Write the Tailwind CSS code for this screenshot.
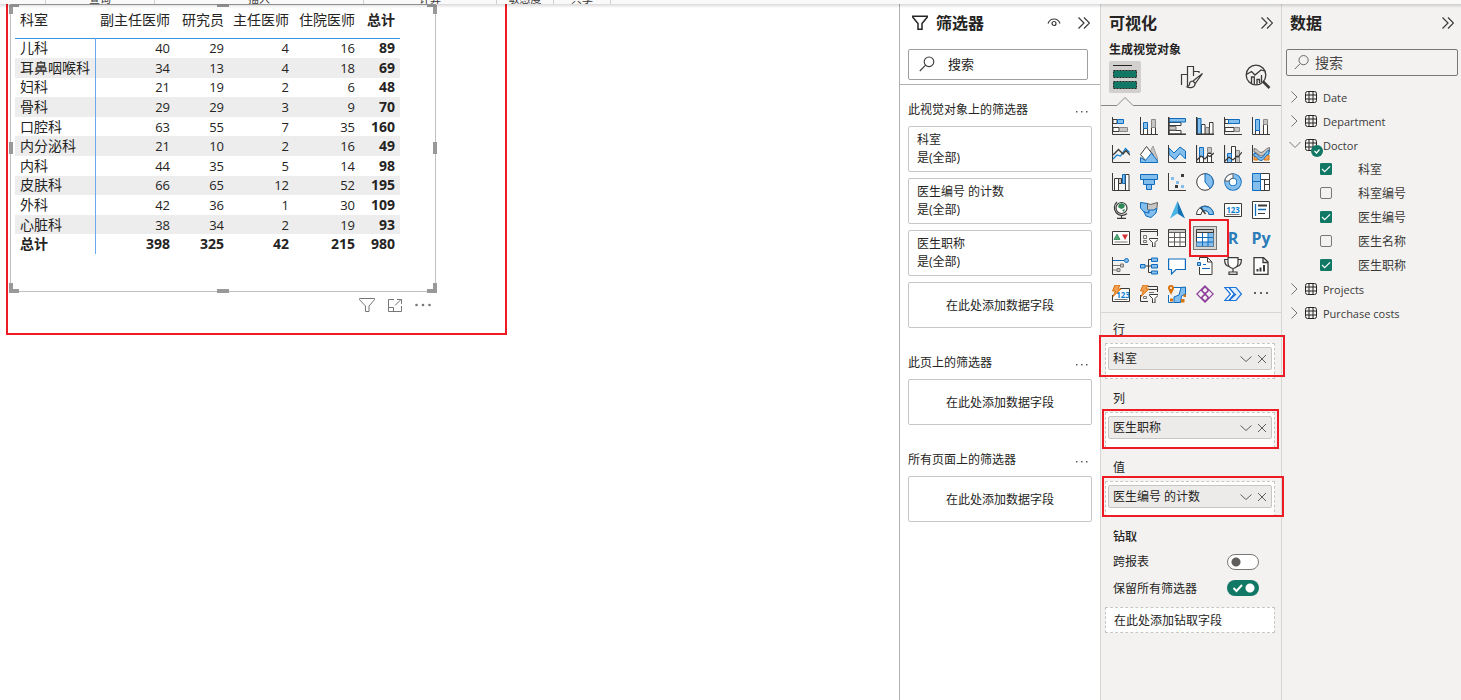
<!DOCTYPE html>
<html lang="zh-CN">
<head>
<meta charset="utf-8">
<meta name="viewport" content="width=device-width, initial-scale=1">
<title>报表</title>
<script src="https://cdn.jsdelivr.net/npm/@tailwindcss/browser@4"></script>
</head>
<body class="flex h-screen flex-col overflow-hidden bg-white font-['Open_Sans','Noto_Sans_CJK_SC',sans-serif] text-xs text-[#252423]">

<!-- Lower edge of the ribbon: group captions -->
<header class="relative z-10 flex h-1 shrink-0 items-end overflow-hidden bg-[#f9f9f9] text-[11px] leading-none text-[#3b3a39]">
  <div class="h-1 w-[46px] border-r border-[#d2d0ce]"></div>
  <div class="flex h-1 w-[109px] items-end justify-center border-r border-[#d2d0ce]"><span>查询</span></div>
  <div class="flex h-1 w-[209px] items-end justify-center border-r border-[#d2d0ce]"><span>插入</span></div>
  <div class="flex h-1 w-[133px] items-end justify-center border-r border-[#d2d0ce]"><span>计算</span></div>
  <div class="flex h-1 w-[57px] items-end justify-center border-r border-[#d2d0ce]"><span>敏感度</span></div>
  <div class="flex h-1 w-[57px] items-end justify-center border-r border-[#d2d0ce]"><span>共享</span></div>
</header>

<div class="relative flex min-h-0 flex-1">
  <div class="pointer-events-none absolute inset-x-0 top-0 z-10 h-1 bg-linear-to-b from-black/15 to-transparent"></div>

  <!-- Report canvas -->
  <main class="relative min-w-0 flex-1 overflow-hidden">
    <section class="relative ml-[10px] h-[288px] w-[426px] border border-[#c0c0c0] border-t-[#a6a6a6] pl-1" aria-label="矩阵">
      <table class="h-[249px] w-[385px] table-fixed border-collapse text-right text-[13px] leading-[18px] [&_td]:p-0 [&_td]:pr-[5px] [&_tbody_th]:border-r [&_tbody_th]:border-[#69a8ec] [&_tbody_th]:p-0 [&_tbody_th]:pl-[5px] [&_tbody_th]:text-left [&_tbody_th]:text-sm [&_tbody_th]:leading-[18px]">
        <colgroup><col class="w-[80px]"><col class="w-[80px]"><col class="w-[54px]"><col class="w-[65px]"><col class="w-[66px]"><col class="w-[40px]"></colgroup>
        <thead>
          <tr class="h-[33px] border-b border-[#3a96e0] text-sm leading-[18px] [&>th]:p-0 [&>th]:pt-[6px] [&>th]:pr-[5px] [&>th]:align-top [&>th]:whitespace-nowrap">
            <th scope="col" class="font-normal"><span class="block pl-[5px] text-left">科室</span></th><th scope="col" class="font-normal">副主任医师</th><th scope="col" class="font-normal">研究员</th><th scope="col" class="font-normal">主任医师</th><th scope="col" class="font-normal">住院医师</th><th scope="col" class="font-bold">总计</th>
          </tr>
        </thead>
        <tbody class="[&_td:last-child]:text-sm [&_td:last-child]:leading-[18px] [&_td:last-child]:font-bold">
          <tr><th scope="row" class="font-normal">儿科</th><td>40</td><td>29</td><td>4</td><td>16</td><td>89</td></tr>
          <tr class="bg-[#ededed]"><th scope="row" class="font-normal">耳鼻咽喉科</th><td>34</td><td>13</td><td>4</td><td>18</td><td>69</td></tr>
          <tr><th scope="row" class="font-normal">妇科</th><td>21</td><td>19</td><td>2</td><td>6</td><td>48</td></tr>
          <tr class="bg-[#ededed]"><th scope="row" class="font-normal">骨科</th><td>29</td><td>29</td><td>3</td><td>9</td><td>70</td></tr>
          <tr><th scope="row" class="font-normal">口腔科</th><td>63</td><td>55</td><td>7</td><td>35</td><td>160</td></tr>
          <tr class="bg-[#ededed]"><th scope="row" class="font-normal">内分泌科</th><td>21</td><td>10</td><td>2</td><td>16</td><td>49</td></tr>
          <tr><th scope="row" class="font-normal">内科</th><td>44</td><td>35</td><td>5</td><td>14</td><td>98</td></tr>
          <tr class="bg-[#ededed]"><th scope="row" class="font-normal">皮肤科</th><td>66</td><td>65</td><td>12</td><td>52</td><td>195</td></tr>
          <tr><th scope="row" class="font-normal">外科</th><td>42</td><td>36</td><td>1</td><td>30</td><td>109</td></tr>
          <tr class="bg-[#ededed]"><th scope="row" class="font-normal">心脏科</th><td>38</td><td>34</td><td>2</td><td>19</td><td>93</td></tr>
          <tr class="text-sm leading-[18px] font-bold"><th scope="row" class="font-bold">总计</th><td>398</td><td>325</td><td>42</td><td>215</td><td>980</td></tr>
        </tbody>
      </table>
      <!-- Resize handles -->
      <i class="absolute top-0 -left-[2px] h-[9px] w-[10px] border-t-2 border-l-4 border-[#999]"></i>
      <i class="absolute top-0 -right-[2px] h-[9px] w-[10px] border-t-2 border-r-4 border-[#999]"></i>
      <i class="absolute -bottom-[2px] -left-[2px] h-[10px] w-[10px] border-b-4 border-l-4 border-[#999]"></i>
      <i class="absolute -right-[2px] -bottom-[2px] h-[10px] w-[10px] border-r-4 border-b-4 border-[#999]"></i>
      <i class="absolute -top-px left-[206px] h-[3px] w-3 bg-[#999]"></i>
      <i class="absolute -bottom-[2px] left-[206px] h-1 w-3 bg-[#999]"></i>
      <i class="absolute top-[137px] -left-[2px] h-3 w-1 bg-[#999]"></i>
      <i class="absolute top-[137px] -right-[2px] h-3 w-1 bg-[#999]"></i>
    </section>
    <div class="flex w-[431px] items-center justify-end gap-3 pt-[5px]">
      <button aria-label="筛选" class="size-4"><svg viewBox="0 0 16 16" class="size-4" fill="none" stroke="#777"><path d="M.5 1.500h15v1.200L10 9v5.500H6.500V9L.5 2.700z"/></svg></button>
      <button aria-label="焦点模式" class="size-4"><svg viewBox="0 0 16 16" class="size-4" fill="none" stroke="#777"><path d="M7 2.500H1.500v12h13V9M1.500 10.500h5v4M8 8.500l6-6M10 2.500h4.500V7"/></svg></button>
      <button aria-label="更多选项" class="size-4"><svg viewBox="0 0 16 16" class="size-4" fill="#777"><circle cx="1.500" cy="8" r="1.300"/><circle cx="8" cy="8" r="1.300"/><circle cx="14.500" cy="8" r="1.300"/></svg></button>
    </div>
    <div class="pointer-events-none absolute -top-1 left-[6px] h-[335px] w-[501px] border-x-2 border-b-2 border-[#ed1c24]"></div>
  </main>

  <!-- Filter pane -->
  <aside class="flex w-[201px] shrink-0 flex-col border-l border-[#b3b0ad] bg-white">
    <div class="border-b border-[#b3b0ad] px-2 pb-1">
      <div class="flex h-[45px] items-center pb-[7px] pl-1">
        <svg viewBox="0 0 16 16" class="size-4" fill="none" stroke="#252423" stroke-width="1.500"><path d="M.8 1.200h14.400v1L10 8.500v5.700H6V8.500L.8 2.200z"/></svg>
        <h2 class="ml-2 flex-1 text-base leading-5 font-bold">筛选器</h2>
        <button aria-label="隐藏筛选器" class="mr-[17px]"><svg viewBox="0 0 14 12" class="h-3 w-[14px]" fill="none" stroke="#3b3a39" stroke-width="1.200"><path d="M1 6.500C2.200 3.500 4.500 2 7 2s4.800 1.500 6 4.500"/><circle cx="7" cy="6.500" r="2"/></svg></button>
        <button aria-label="折叠" class="mr-[2px]"><svg viewBox="0 0 12 14" class="h-[14px] w-3" fill="none" stroke="#3b3a39" stroke-width="1.200"><path d="M.5 1.500L6 7 .5 12.500M6 1.500L11.500 7 6 12.500"/></svg></button>
      </div>
      <label class="mr-1 flex h-[31px] items-center rounded-[2px] border border-[#a19f9d] pb-[2px] pl-[10px]">
        <svg viewBox="0 0 16 16" class="size-4 shrink-0" fill="none" stroke="#3b3a39" stroke-width="1.100"><circle cx="10" cy="5.800" r="4.800"/><path d="M6.600 9.200L.8 15"/></svg>
        <input type="text" aria-label="搜索筛选器" placeholder="搜索" class="ml-[13px] min-w-0 flex-1 text-[13px] leading-5 outline-none placeholder:text-[#252423]">
      </label>
    </div>
    <div class="flex flex-col gap-[26px] px-2 pt-4 leading-[18px]">
      <section>
        <div class="flex h-[18px] items-center justify-between pr-1"><h3>此视觉对象上的筛选器</h3><button aria-label="更多"><svg viewBox="0 0 12 4" class="mt-1 h-1 w-3" fill="#605e5c"><path d="M0 1h1.500v1.500H0zM5 1h1.500v1.500H5zM10 1h1.500v1.500H10z"/></svg></button></div>
        <div class="mt-[7px] flex flex-col gap-[6px]">
          <div class="flex h-[46px] flex-col justify-center rounded-[2px] border border-[#c8c6c4] px-2"><span>科室</span><span>是(全部)</span></div>
          <div class="flex h-[46px] flex-col justify-center rounded-[2px] border border-[#c8c6c4] px-2"><span>医生编号 的计数</span><span>是(全部)</span></div>
          <div class="flex h-[46px] flex-col justify-center rounded-[2px] border border-[#c8c6c4] px-2"><span>医生职称</span><span>是(全部)</span></div>
          <div class="flex h-[46px] items-center justify-center rounded-[2px] border border-[#c8c6c4] pt-[2px]">在此处添加数据字段</div>
        </div>
      </section>
      <section>
        <div class="flex h-[18px] items-center justify-between pr-1"><h3>此页上的筛选器</h3><button aria-label="更多"><svg viewBox="0 0 12 4" class="mt-1 h-1 w-3" fill="#605e5c"><path d="M0 1h1.500v1.500H0zM5 1h1.500v1.500H5zM10 1h1.500v1.500H10z"/></svg></button></div>
        <div class="mt-[7px] flex h-[46px] items-center justify-center rounded-[2px] border border-[#c8c6c4] pt-[2px]">在此处添加数据字段</div>
      </section>
      <section>
        <div class="flex h-[18px] items-center justify-between pr-1"><h3>所有页面上的筛选器</h3><button aria-label="更多"><svg viewBox="0 0 12 4" class="mt-1 h-1 w-3" fill="#605e5c"><path d="M0 1h1.500v1.500H0zM5 1h1.500v1.500H5zM10 1h1.500v1.500H10z"/></svg></button></div>
        <div class="mt-[7px] flex h-[46px] items-center justify-center rounded-[2px] border border-[#c8c6c4] pt-[2px]">在此处添加数据字段</div>
      </section>
    </div>
  </aside>

  <!-- Visualizations pane -->
  <aside class="relative w-[182px] shrink-0 border-x border-[#d8d6d4] bg-[#f3f2f1]">
    <div class="flex h-[38px] items-center justify-between pr-2 pl-2">
      <h2 class="text-base leading-5 font-bold">可视化</h2>
      <button aria-label="折叠"><svg viewBox="0 0 12 14" class="h-[14px] w-3" fill="none" stroke="#3b3a39" stroke-width="1.200"><path d="M.5 1.500L6 7 .5 12.500M6 1.500L11.500 7 6 12.500"/></svg></button>
    </div>
    <h3 class="h-[19px] pl-2 text-xs leading-4 font-bold">生成视觉对象</h3>
    <div class="flex h-8 justify-between pr-[7px] pl-2">
      <button aria-label="生成视觉对象" class="grid size-8 place-items-center rounded-[2px] bg-[#d2d0ce]"><svg viewBox="0 0 24 24" class="size-6" fill="#117865"><path d="M0 .5h19" stroke="#252423"/><path d="M.5 5.500h23v7H.5zM.5 16.500h23v7H.5z" stroke="#252423" stroke-dasharray="2 1"/></svg></button>
      <button aria-label="设置视觉对象格式" class="grid size-8 place-items-center"><svg viewBox="0 0 24 24" class="size-6" fill="none" stroke="#3b3a39" stroke-width="1.200"><path d="M1.500 20V9.500h6V21M7.500 12V1.500h6V11M13.500 6.500H19V8"/><path d="M22.500 8.500L13 16l2.200 2.500zM13 16c-2.500 0-3.500 1.500-3.500 3.500-.5 1.500-1.500 2.200-2.500 2.500 3 1.500 8 .5 8.200-3.500z"/></svg></button>
      <button aria-label="分析" class="grid size-8 place-items-center"><svg viewBox="0 0 26 26" class="size-[26px]" fill="none" stroke="#3b3a39" stroke-width="1.300"><circle cx="11" cy="11" r="9.800"/><path d="M1.500 10.500l5-3 3.500 3.500 6-5 3.500 1M6.500 19v-6h2.800v7.500M12 20.500v-5h2.500V19M16.500 18v-7"/><path d="M18 17.500l6.500 6.500" stroke-width="2.500"/></svg></button>
    </div>
    <svg viewBox="0 0 180 12" preserveAspectRatio="none" class="mt-1 block h-3 w-full" fill="none" stroke="#8a8886"><path d="M0 8.500h16l8-8 8 8h148"/></svg>

    <div class="mx-[6px] mt-[3px] grid grid-cols-6 text-[#2b7cb8] [&_svg]:size-[18px] [&>button]:grid [&>button]:h-7 [&>button]:place-items-center">
      <!-- row 1 -->
      <button aria-label="堆积条形图"><svg viewBox="0 0 18 18" fill="#fff" stroke="#3b3a39"><path d="M1 2.500h4v4H1zM1 10.500h6v4H1z"/><path d="M5.500 2.500h6v4h-6z" fill="#83beec" stroke="#0f6cbd"/><path d="M7.500 10.500h8v4h-8z" fill="#c8c6c4" stroke="#8a8886"/><path d="M.5 0v17.500H18" fill="none"/></svg></button>
      <button aria-label="堆积柱形图"><svg viewBox="0 0 18 18" fill="#fff" stroke="#3b3a39"><path d="M3.500 11.500h4v6h-4zM11.500 10.500h4v7h-4z"/><path d="M3.500 5.500h4v6h-4z" fill="#83beec" stroke="#0f6cbd"/><path d="M11.500 2.500h4v8h-4z" fill="#c8c6c4" stroke="#8a8886"/><path d="M.5 0v17.500H18" fill="none"/></svg></button>
      <button aria-label="簇状条形图"><svg viewBox="0 0 18 18" fill="#fff" stroke="#797775"><path d="M1 5.500h12v3H1zM1 13.500h12v3.500H1z" stroke="#3b3a39"/><path d="M1 1.500h16.500v3.500H1z" fill="#83beec" stroke="#0f6cbd"/><path d="M1 9.500h7v3.500H1z" fill="#c8c6c4"/><path d="M.7 0v17.300H18" fill="none" stroke="#3b3a39" stroke-width="1.500"/></svg></button>
      <button aria-label="簇状柱形图"><svg viewBox="0 0 18 18" fill="#fff" stroke="#797775"><path d="M5.500 7.500h3.500v10H5.500zM13.500 5.500h3.500v12h-3.500z" stroke="#3b3a39"/><path d="M1.500 1.500h3.500v16H1.500z" fill="#83beec" stroke="#0f6cbd"/><path d="M9.500 10.500h3.500v7H9.500z" fill="#c8c6c4"/><path d="M.7 0v17.300H18" fill="none" stroke="#3b3a39" stroke-width="1.500"/></svg></button>
      <button aria-label="百分比堆积条形图"><svg viewBox="0 0 18 18" fill="#fff" stroke="#3b3a39"><path d="M1 2.500h4v4H1zM1 10.500h9v4H1z"/><path d="M4.500 2.500h11v4h-11z" fill="#83beec" stroke="#0f6cbd"/><path d="M10.500 10.500h5v4h-5z" fill="#c8c6c4" stroke="#8a8886"/><path d="M.5 0v17.500H18" fill="none"/></svg></button>
      <button aria-label="百分比堆积柱形图"><svg viewBox="0 0 18 18" fill="#fff" stroke="#3b3a39"><path d="M3.500 12.500h4v5h-4zM11.500 7.500h4v10h-4z"/><path d="M3.500 2.500h4v11h-4z" fill="#83beec" stroke="#0f6cbd"/><path d="M11.500 2.500h4v5h-4z" fill="#c8c6c4" stroke="#8a8886"/><path d="M.5 0v17.500H18" fill="none"/></svg></button>
      <!-- row 2 -->
      <button aria-label="折线图"><svg viewBox="0 0 18 18" fill="none" stroke="#3b3a39"><path d="M1 14l4-4 3.500 1 5-7.500 4 4" stroke="#0f7fd0" stroke-width="1.200"/><path d="M1 10l5.500-5.500L11 9l3-3.500L18 10" stroke-width="1.400"/><path d="M.5 0v17.500H18"/></svg></button>
      <button aria-label="分区图"><svg viewBox="0 0 18 18" fill="#fff" stroke="#3b3a39"><path d="M9 9l4-8 4.500 12v4z" fill="#c8c6c4" stroke="#a19f9d"/><path d="M.5 9.500l6-8 7 9-7 6z"/><path d="M.5 17.500v-5l5 3L11.500 8l6 8v1.500z" fill="#83beec" stroke="#0f6cbd"/></svg></button>
      <button aria-label="堆积面积图"><svg viewBox="0 0 18 18" fill="none" stroke="#3b3a39"><path d="M1 3l5 5 6-6 5.500 4v8L12 8.500l-5 6-6-5z" fill="#83beec" stroke="#0f6cbd"/><path d="M.5 0v17.500H18"/></svg></button>
      <button aria-label="折线和堆积柱形图"><svg viewBox="0 0 18 18" fill="#fff" stroke="#3b3a39"><path d="M3.500 10.500h4v7h-4zM11.500 8.500h4v9h-4z"/><path d="M3.500 2.500h4v9h-4z" fill="#83beec" stroke="#0f6cbd"/><path d="M11.500 2.500h4v5h-4z" fill="#c8c6c4" stroke="#8a8886"/><path d="M.5 0v17.500H18M1 15l4-4 4 3 3-3.500 2 1L18 8" fill="none" stroke-width="1.200"/></svg></button>
      <button aria-label="折线和簇状柱形图"><svg viewBox="0 0 18 18" fill="#fff" stroke="#3b3a39"><path d="M11.500 5.500h4v12h-4z" fill="#c8c6c4" stroke="#8a8886"/><path d="M7.500 1.500h4v16h-4z"/><path d="M3.500 8.500h4v9h-4z" fill="#83beec" stroke="#0f6cbd"/><path d="M.5 0v17.500H18M1 16l4-4 4 3 4-4 1 1 4-5" fill="none" stroke-width="1.200"/></svg></button>
      <button aria-label="功能区图表"><svg viewBox="0 0 18 18" fill="none"><path d="M2 9h4v6H2zM12 10h5v5h-5z" fill="#f2a154" stroke="#d9730d"/><path d="M2 3.500c4 0 4 4 7 4s4-4 8.500-5v4C13 8 12 11 9 11S6 7 2 7z" fill="#c8c6c4" stroke="#797775"/><path d="M2 8c4 0 4 4.500 7 4.500S12 8 17 5v4c-4 1-5 6.500-8 6.500S6 12 2 11z" fill="#83beec" stroke="#0f6cbd"/><path d="M.5 0v17.500H18" stroke="#3b3a39"/></svg></button>
      <!-- row 3 -->
      <button aria-label="瀑布图"><svg viewBox="0 0 18 18" fill="#fff" stroke="#3b3a39"><path d="M2.500 5.500h4v12h-4zM13.500 1.500h3.500v16h-3.500z"/><path d="M6.500 5.500h3v5h-3z" fill="#c8c6c4"/><path d="M10.500 1.500h2.500v9h-2.500z" fill="#83beec" stroke="#0f6cbd"/><path d="M.5 0v17.500H18" fill="none"/></svg></button>
      <button aria-label="漏斗图"><svg viewBox="0 0 18 18" fill="#83beec" stroke="#0f6cbd"><path d="M.5 1.500h17v5H.5zM3.500 6.500h11v5h-11zM6.500 11.500h5v5h-5z"/></svg></button>
      <button aria-label="散点图"><svg viewBox="0 0 18 18"><path d="M3 4h3v3H3zM8 8h3v3H8zM13 12h3v3h-3z" fill="#83beec"/><path d="M13 1h3v3h-3zM7 12h3v3H7z" fill="#3b3a39"/><path d="M.5 0v17.500H18" fill="none" stroke="#3b3a39"/></svg></button>
      <button aria-label="饼图"><svg viewBox="0 0 18 18"><circle cx="9" cy="9" r="8.300" fill="#fff" stroke="#3b3a39"/><path d="M9 9V.7a8.300 8.300 0 0 1 5.300 14.600z" fill="#83beec" stroke="#0f6cbd"/></svg></button>
      <button aria-label="圆环图"><svg viewBox="0 0 18 18"><circle cx="9" cy="9" r="6" fill="#fff" stroke="#0f6cbd" stroke-width="5.500"/><circle cx="9" cy="9" r="6" fill="none" stroke="#83beec" stroke-width="3.800"/><path d="M9 .7A8.300 8.300 0 0 0 .8 8h4.500A3.800 3.800 0 0 1 9 5.200z" fill="#fff" stroke="#605e5c"/></svg></button>
      <button aria-label="树状图"><svg viewBox="0 0 18 18" fill="#fff" stroke="#3b3a39"><path d="M8.500.5h9v17h-9zM8.500 6.500h9M12.500 6.500v11M12.500 11.500h5" /><path d="M.5.5h8v17h-8zM.5 8.500h8" fill="#83beec" stroke="#0f6cbd"/></svg></button>
      <!-- row 4 -->
      <button aria-label="地图"><svg viewBox="0 0 18 18" fill="none" stroke="#3b3a39" stroke-width="1.200"><circle cx="9.500" cy="7" r="5.500" fill="#fff"/><path d="M7 3l3-1 3 2-1 3-3 1-3-2zM10 9l3-1-1 3z" fill="#2e8b57" stroke="none"/><path d="M5 1A7.500 7.500 0 1 0 15 12.500M9.500 14.500v2.500M5 17.300h9"/></svg></button>
      <button aria-label="着色地图"><svg viewBox="0 0 18 18" stroke="#0f6cbd"><path d="M.5 1.500l7 1V8L9 9v4l-5-2-3.500-4z" fill="#83beec"/><path d="M7.500 2.500l3 1 7-2-.5 5-3 3H9L7.500 8z" fill="#c8c6c4" stroke="#605e5c"/><path d="M9 9h5l3-2-1 5-5 4.500L6 15l-2-4 5 1z" fill="#83beec"/></svg></button>
      <button aria-label="Azure 地图"><svg viewBox="0 0 18 18"><path d="M9.500 0L2 17.500l7.500-5z" fill="#47b5e6"/><path d="M9.500 0L17 17.500l-7.500-5z" fill="#1272b6"/></svg></button>
      <button aria-label="仪表"><svg viewBox="0 0 18 18"><path d="M.5 13.500a8.500 8.500 0 0 1 17 0H13a4 4 0 0 0-8 0z" fill="#fff" stroke="#3b3a39"/><path d="M4 7a8.500 8.500 0 0 1 13.500 6.500H13a4 4 0 0 0-5-3.800z" fill="#83beec" stroke="#0f6cbd"/><path d="M9.500 13L5 7" stroke="#3b3a39" stroke-width="1.400"/></svg></button>
      <button aria-label="卡片"><svg viewBox="0 0 18 18"><path d="M.5 2.500h17v13H.5z" fill="#fff" stroke="#3b3a39"/><path d="M2.500 13.500h13" stroke="#797775"/><text x="9" y="11.500" text-anchor="middle" font-size="8" font-weight="700" fill="#0f7fd0">123</text></svg></button>
      <button aria-label="多行卡"><svg viewBox="0 0 18 18"><path d="M.5.500h17v17H.5z" fill="#fff" stroke="#3b3a39"/><path d="M3.500 3v12" stroke="#0f6cbd" stroke-width="1.300"/><path d="M6 12.500h7" stroke="#3b3a39"/><path d="M6 4.500h9" stroke="#3b3a39" stroke-width="2"/><path d="M6 8.500h8" stroke="#0f6cbd" stroke-width="1.500"/></svg></button>
      <!-- row 5 -->
      <button aria-label="KPI"><svg viewBox="0 0 18 18"><path d="M.5 2.500h17v13H.5z" fill="#fff" stroke="#3b3a39"/><path d="M2 10.500L5 5l3 5.500z" fill="#4ea872" stroke="#237b4b" stroke-width=".7"/><path d="M10 5.500h6L13 11z" fill="#d13438"/><path d="M2.500 13h13" stroke="#797775"/></svg></button>
      <button aria-label="切片器"><svg viewBox="0 0 18 18" fill="none" stroke="#3b3a39"><path d="M8 15.500H.5V.5h17V7M.5 2.500h17"/><path d="M3.500 6.500h3v3h-3zM3.500 11.500h3v2h-3z" stroke="#797775"/><path d="M9.500 9.500h8.500v1L15 13.500V18h-2.500v-4.500l-3-3z" fill="#fff"/></svg></button>
      <button aria-label="表"><svg viewBox="0 0 18 18" fill="#fff" stroke="#3b3a39"><path d="M.5.500h17v17H.5z"/><path d="M1 1h16v2.500H1z" fill="#c8c6c4" stroke="none"/><path d="M.5 3.500h17M.5 8.500h17M.5 13h17M6.500 4v13.500M12 4v13.500" stroke="#605e5c"/></svg></button>
      <button aria-label="矩阵" aria-pressed="true"><span class="grid size-6 place-items-center border border-[#797775] bg-[#d9d7d5]"><svg viewBox="0 0 18 18" fill="#fff" stroke="#3b3a39"><path d="M.5.500h17v17H.5z"/><path d="M1 1h16v2.500H1z" fill="#c8c6c4" stroke="none"/><path d="M12 3.500h5.500v14H.5V13H12z" fill="#83beec" stroke="none"/><path d="M.5 3.500h17"/><path d="M1 8.500h16M1 13h16M6.500 4v13M12 4v13" stroke="#0f6cbd"/></svg></span></button>
      <button aria-label="R 脚本视觉对象" class="text-base leading-5 font-bold">R</button>
      <button aria-label="Python 视觉对象" class="text-base leading-5 font-bold">Py</button>
      <!-- row 6 -->
      <button aria-label="关键影响者"><svg viewBox="0 0 18 18" fill="none" stroke="#3b3a39"><path d="M.5 0v17.500H18"/><path d="M1 3.500h11" stroke="#0f6cbd"/><circle cx="14.500" cy="3.500" r="2" fill="#83beec" stroke="#0f6cbd"/><path d="M1 8.500h7M1 13h4" stroke="#797775"/><path d="M8.500 7h3v3h-3zM5 11.500h3v3H5z" fill="#c8c6c4" stroke="#797775"/></svg></button>
      <button aria-label="分解树"><svg viewBox="0 0 18 18" fill="#83beec" stroke="#0f6cbd"><path d="M5 9h3M12 2.500H8.500v13H12M8.500 9H12" fill="none" stroke="#3b3a39"/><path d="M.5 7.500H5V11H.5zM11.500 1h6v3.500h-6zM11.500 7.500h6V11h-6zM11.500 14h6v3h-6z"/></svg></button>
      <button aria-label="问答"><svg viewBox="0 0 18 18" fill="#fff" stroke="#0f6cbd" stroke-width="1.200"><path d="M.6 2h16.800v10.500H8L3.500 17v-4.500H.6z"/></svg></button>
      <button aria-label="智能叙述"><svg viewBox="0 0 18 18" fill="#fff" stroke="#3b3a39"><path d="M3.500 3V.5h8L16 5v12.500H3.500V10"/><path d="M11.500.5V5h4.500" fill="none"/><path d="M1.500 5.500h3v3h-3z" fill="#83beec" stroke="#0f6cbd"/><path d="M7 7.500h3M6 11.500h8" stroke="#0f6cbd"/></svg></button>
      <button aria-label="指标"><svg viewBox="0 0 18 18" fill="#fff" stroke="#3b3a39" stroke-width="1.200"><path d="M4 2.500H.6C.6 7 2 9 5 9.500M14 2.500h3.400C17.400 7 16 9 13 9.500" fill="none"/><path d="M4 .6h10V6c0 3-2 5-5 5.500C6 11 4 9 4 6zM9 11.500V15M5 17.400h8V15H5z"/></svg></button>
      <button aria-label="分页报表"><svg viewBox="0 0 18 18" fill="#fff" stroke="#3b3a39" stroke-width="1.300"><path d="M2 .700h9.500L16 5v12.300H2z"/><path d="M11 .700V5.500h5" fill="none"/><path d="M5.500 14.500V12M8.500 14.500V10.500M12 14.500V8" stroke-width="2"/></svg></button>
      <!-- row 7 -->
      <button aria-label="卡片（新）"><svg viewBox="0 0 18 18"><path d="M8 3.500h9.500v13H.5V10" fill="#fff" stroke="#3b3a39"/><path d="M2.500 14.500h13" stroke="#797775"/><text x="11" y="12.500" text-anchor="middle" font-size="8" font-weight="700" fill="#0f7fd0">123</text><path d="M3 0h5L6 4h3L1 11.500 3.500 6H.5z" fill="#f2a154" stroke="#d9730d"/></svg></button>
      <button aria-label="切片器（新）"><svg viewBox="0 0 18 18" fill="none" stroke="#3b3a39"><path d="M8 16.500H.5V10M8 1.500h9.500V7M8 4.500h9.500"/><path d="M3.500 11.500h3v2h-3zM9 7.500h5" stroke="#797775"/><path d="M9.500 9.500h8.500v1L15 13.500V18h-2.500v-4.500l-3-3z" fill="#fff"/><path d="M3 0h5L6 4h3L1 11.500 3.500 6H.5z" fill="#f2a154" stroke="#d9730d"/></svg></button>
      <button aria-label="ArcGIS 地图"><svg viewBox="0 0 18 18"><path d="M5 2.500h12.500v9M5.500 17.500H.500V10" fill="#fff" stroke="#0f6cbd"/><path d="M17.500 2v7l-4 2-1 6.500H6V12l5-2 2-7.500z" fill="#83beec" stroke="#0f6cbd"/><path d="M3 0a3 3 0 0 1 3 3c0 2-2 4-3 7C2 7 0 5 0 3a3 3 0 0 1 3-3zM13 14h3.500v3.500H13zM15.500 9.500H18V12h-2.500zM2 13.500h3v3H2z" fill="#d9730d"/><circle cx="3" cy="3" r="1" fill="#fff"/></svg></button>
      <button aria-label="Power Apps"><svg viewBox="0 0 18 18" fill="none" stroke="#8f3f9b" stroke-width="1.200"><path d="M9 .8L17.200 9 9 17.200.8 9z"/><path d="M5 5l8 8M13 5l-8 8"/><rect x="6.500" y="2.800" width="5" height="5" rx="1.500" transform="rotate(45 9 5.300)"/><rect x="6.500" y="10.200" width="5" height="5" rx="1.500" transform="rotate(45 9 12.700)"/></svg></button>
      <button aria-label="Power Automate"><svg viewBox="0 0 18 18" fill="none" stroke="#1a73d9" stroke-width="1.200"><path d="M.8 2.500H5L10.500 9 5 15.500H.8L6.500 9z" fill="#fff"/><path d="M5 2.500h7L17.400 9 12 15.500H5L10.500 9z" fill="#e4effb"/><path d="M5 15.500L12 9" /></svg></button>
      <button aria-label="更多视觉对象"><svg viewBox="0 0 18 18" fill="#605e5c"><path d="M2 7h2v2H2zM8 7h2v2H8zM14 7h2v2h-2z"/></svg></button>
    </div>

    <div class="mt-1 border-t border-[#d8d6d4] pt-[9px] pr-[6px] pl-1 leading-[18px]">
      <h4 class="pl-2 leading-4">行</h4>
      <div class="mt-[5px] h-9 border border-dashed border-[#c8c6c4] bg-white px-[2px] pt-[3px]">
        <div class="flex h-[23px] items-center rounded-[2px] border border-[#c8c6c4] bg-[#edebe9] px-1">
          <span class="flex-1">科室</span>
          <button aria-label="选项"><svg viewBox="0 0 12 12" class="size-3" fill="none" stroke="#605e5c"><path d="M.5 3.500L6 8.500l5.500-5"/></svg></button>
          <button aria-label="移除" class="ml-[5px]"><svg viewBox="0 0 10 10" class="size-[10px]" fill="none" stroke="#605e5c"><path d="M1 1l8 8M9 1L1 9"/></svg></button>
        </div>
      </div>
      <h4 class="mt-3 pl-2 leading-4">列</h4>
      <div class="mt-[5px] h-9 border border-dashed border-[#c8c6c4] bg-white px-[2px] pt-[3px]">
        <div class="flex h-[23px] items-center rounded-[2px] border border-[#c8c6c4] bg-[#edebe9] px-1">
          <span class="flex-1">医生职称</span>
          <button aria-label="选项"><svg viewBox="0 0 12 12" class="size-3" fill="none" stroke="#605e5c"><path d="M.5 3.500L6 8.500l5.500-5"/></svg></button>
          <button aria-label="移除" class="ml-[5px]"><svg viewBox="0 0 10 10" class="size-[10px]" fill="none" stroke="#605e5c"><path d="M1 1l8 8M9 1L1 9"/></svg></button>
        </div>
      </div>
      <h4 class="mt-3 pl-2 leading-4">值</h4>
      <div class="mt-[5px] h-9 border border-dashed border-[#c8c6c4] bg-white px-[2px] pt-[3px]">
        <div class="flex h-[23px] items-center rounded-[2px] border border-[#c8c6c4] bg-[#edebe9] px-1">
          <span class="flex-1">医生编号 的计数</span>
          <button aria-label="选项"><svg viewBox="0 0 12 12" class="size-3" fill="none" stroke="#605e5c"><path d="M.5 3.500L6 8.500l5.500-5"/></svg></button>
          <button aria-label="移除" class="ml-[5px]"><svg viewBox="0 0 10 10" class="size-[10px]" fill="none" stroke="#605e5c"><path d="M1 1l8 8M9 1L1 9"/></svg></button>
        </div>
      </div>
      <h4 class="mt-3 pl-2 leading-4 font-medium">钻取</h4>
      <div class="mt-[9px] flex h-4 items-center justify-between pr-4 pl-2">
        <label for="cross">跨报表</label>
        <input id="cross" type="checkbox" role="switch" class="h-4 w-8 appearance-none rounded-full border border-[#797775] bg-white bg-[radial-gradient(circle_at_8px_7px,#605e5c_4px,transparent_5px)]">
      </div>
      <div class="mt-[10px] flex h-4 items-center justify-between pr-4 pl-2">
        <label for="keep" class="pt-[2px]">保留所有筛选器</label>
        <span class="relative h-4 w-8">
          <input id="keep" type="checkbox" role="switch" checked class="block h-4 w-8 appearance-none rounded-full bg-[#117865] bg-[radial-gradient(circle_at_23px_8px,#fff_4px,transparent_5px)]">
          <svg viewBox="0 0 12 12" class="pointer-events-none absolute top-[2px] left-[5px] size-3" fill="none" stroke="#fff" stroke-width="2"><path d="M1.500 6l3 3L10 3"/></svg>
        </span>
      </div>
      <div class="mt-[11px] flex h-[26px] items-center border border-dashed border-[#c8c6c4] bg-white pt-[2px] pl-2">在此处添加钻取字段</div>
    </div>

    <!-- Highlight frames -->
    <div class="pointer-events-none absolute top-[215px] left-[88px] z-10 h-[38px] w-10 border-2 border-[#ed1c24]"></div>
    <div class="pointer-events-none absolute top-[331px] -left-[2px] z-10 h-[42px] w-[186px] border-2 border-[#ed1c24]"></div>
    <div class="pointer-events-none absolute top-[405px] left-px z-10 h-10 w-[177px] border-2 border-[#ed1c24]"></div>
    <div class="pointer-events-none absolute top-[472px] left-px z-10 h-[41px] w-[182px] border-2 border-[#ed1c24]"></div>
  </aside>

  <!-- Data pane -->
  <aside class="w-[179px] shrink-0 bg-[#f3f2f1] pr-[3px] pl-1">
    <div class="flex h-[45px] items-center justify-between pr-1 pb-[7px] pl-1">
      <h2 class="text-base leading-5 font-bold">数据</h2>
      <button aria-label="折叠"><svg viewBox="0 0 12 14" class="h-[14px] w-3" fill="none" stroke="#3b3a39" stroke-width="1.200"><path d="M.5 1.500L6 7 .5 12.500M6 1.500L11.500 7 6 12.500"/></svg></button>
    </div>
    <label class="flex h-[27px] items-center rounded-[2px] border border-[#797775] pl-[7px]">
      <svg viewBox="0 0 16 16" class="size-[15px] shrink-0" fill="none" stroke="#605e5c"><circle cx="10.200" cy="5.500" r="4.900"/><path d="M6.600 9.200L.8 15"/></svg>
      <input type="text" aria-label="搜索数据" placeholder="搜索" class="ml-[6px] min-w-0 flex-1 text-sm leading-5 outline-none placeholder:text-[#484644]">
    </label>
    <ul class="mt-[9px] leading-5 text-[#3b3a39] [&_label]:pt-[2px] [&>li]:flex [&>li]:h-6 [&>li]:items-center [&>li>span:last-child]:pt-px">
      <li class="pl-1"><button aria-label="展开"><svg viewBox="0 0 10 14" class="h-[14px] w-[10px]" fill="none" stroke="#797775"><path d="M1.500 1.500L7 7l-5.500 5.500"/></svg></button><svg viewBox="0 0 12 12" class="ml-[5px] size-3" fill="none" stroke="#252423"><rect x=".5" y=".5" width="11" height="11" rx="2"/><path d="M.5 4h11M.5 8h11M4 .5v11M8 .5v11"/></svg><span class="ml-[6px] text-[11px]">Date</span></li>
      <li class="pl-1"><button aria-label="展开"><svg viewBox="0 0 10 14" class="h-[14px] w-[10px]" fill="none" stroke="#797775"><path d="M1.500 1.500L7 7l-5.500 5.500"/></svg></button><svg viewBox="0 0 12 12" class="ml-[5px] size-3" fill="none" stroke="#252423"><rect x=".5" y=".5" width="11" height="11" rx="2"/><path d="M.5 4h11M.5 8h11M4 .5v11M8 .5v11"/></svg><span class="ml-[6px] text-[11px]">Department</span></li>
      <li class="pl-[3px]"><button aria-label="折叠表"><svg viewBox="0 0 12 10" class="h-[10px] w-3" fill="none" stroke="#797775"><path d="M.5 2L6 7.500 11.500 2"/></svg></button><span class="relative ml-1 size-3"><svg viewBox="0 0 12 12" class="size-3" fill="none" stroke="#252423"><rect x=".5" y=".5" width="11" height="11" rx="2"/><path d="M.5 4h11M.5 8h11M4 .5v11M8 .5v11"/></svg><svg viewBox="0 0 12 12" class="absolute top-[6px] left-[6px] size-3"><circle cx="6" cy="6" r="6" fill="#117865"/><path d="M3.500 6l2 2 3-3.500" fill="none" stroke="#fff" stroke-width="1.200"/></svg></span><span class="ml-[6px] text-[11px]">Doctor</span></li>
      <li class="pl-[34px]"><span class="relative size-3"><input id="f1" type="checkbox" checked class="peer block size-3 appearance-none rounded-[1px] border border-[#797775] checked:border-[#117865] checked:bg-[#117865]"><svg viewBox="0 0 12 12" class="pointer-events-none absolute inset-0 hidden size-3 peer-checked:block" fill="none" stroke="#fff" stroke-width="1.200"><path d="M2 6l2.700 2.700L10 3.300"/></svg></span><label for="f1" class="ml-[26px]">科室</label></li>
      <li class="pl-[34px]"><input id="f2" type="checkbox" class="block size-3 appearance-none rounded-[2px] border border-[#797775]"><label for="f2" class="ml-[26px]">科室编号</label></li>
      <li class="pl-[34px]"><span class="relative size-3"><input id="f3" type="checkbox" checked class="peer block size-3 appearance-none rounded-[1px] border border-[#797775] checked:border-[#117865] checked:bg-[#117865]"><svg viewBox="0 0 12 12" class="pointer-events-none absolute inset-0 hidden size-3 peer-checked:block" fill="none" stroke="#fff" stroke-width="1.200"><path d="M2 6l2.700 2.700L10 3.300"/></svg></span><label for="f3" class="ml-[26px]">医生编号</label></li>
      <li class="pl-[34px]"><input id="f4" type="checkbox" class="block size-3 appearance-none rounded-[2px] border border-[#797775]"><label for="f4" class="ml-[26px]">医生名称</label></li>
      <li class="pl-[34px]"><span class="relative size-3"><input id="f5" type="checkbox" checked class="peer block size-3 appearance-none rounded-[1px] border border-[#797775] checked:border-[#117865] checked:bg-[#117865]"><svg viewBox="0 0 12 12" class="pointer-events-none absolute inset-0 hidden size-3 peer-checked:block" fill="none" stroke="#fff" stroke-width="1.200"><path d="M2 6l2.700 2.700L10 3.300"/></svg></span><label for="f5" class="ml-[26px]">医生职称</label></li>
      <li class="pl-1"><button aria-label="展开"><svg viewBox="0 0 10 14" class="h-[14px] w-[10px]" fill="none" stroke="#797775"><path d="M1.500 1.500L7 7l-5.500 5.500"/></svg></button><svg viewBox="0 0 12 12" class="ml-[5px] size-3" fill="none" stroke="#252423"><rect x=".5" y=".5" width="11" height="11" rx="2"/><path d="M.5 4h11M.5 8h11M4 .5v11M8 .5v11"/></svg><span class="ml-[6px] text-[11px]">Projects</span></li>
      <li class="pl-1"><button aria-label="展开"><svg viewBox="0 0 10 14" class="h-[14px] w-[10px]" fill="none" stroke="#797775"><path d="M1.500 1.500L7 7l-5.500 5.500"/></svg></button><svg viewBox="0 0 12 12" class="ml-[5px] size-3" fill="none" stroke="#252423"><rect x=".5" y=".5" width="11" height="11" rx="2"/><path d="M.5 4h11M.5 8h11M4 .5v11M8 .5v11"/></svg><span class="ml-[6px] text-[11px]">Purchase costs</span></li>
    </ul>
  </aside>
</div>
</body>
</html>
